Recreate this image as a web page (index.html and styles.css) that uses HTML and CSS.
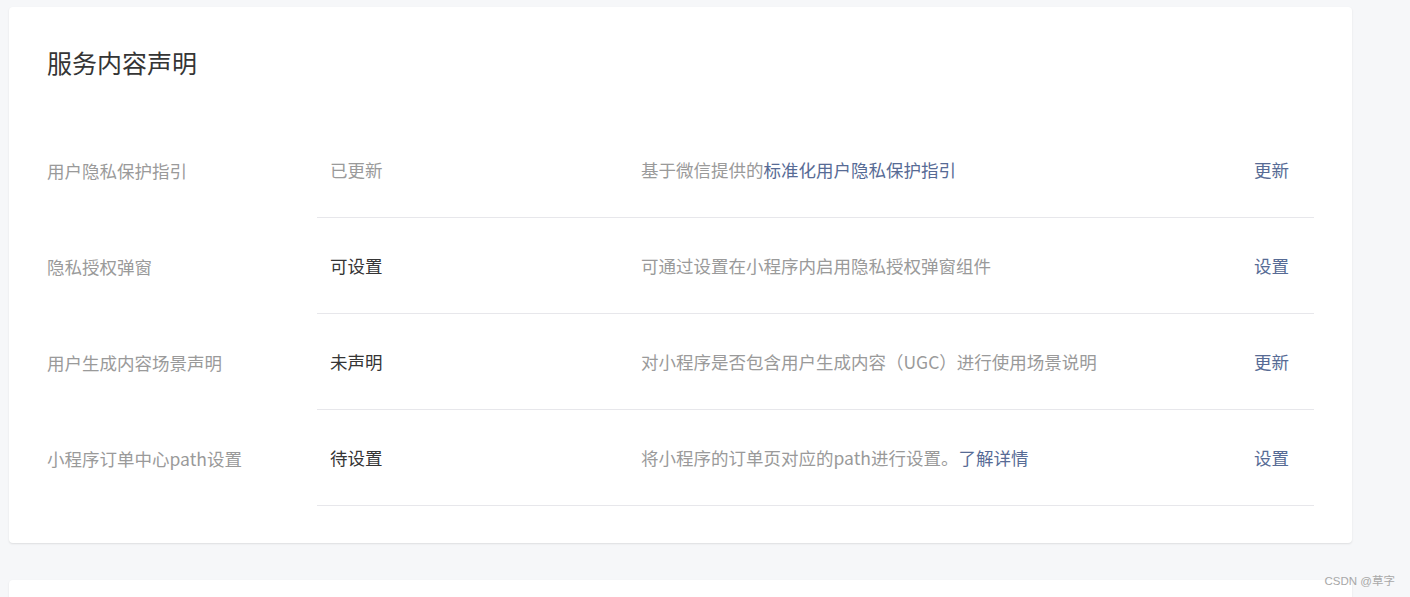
FILE: index.html
```html
<!DOCTYPE html>
<html lang="zh-CN">
  <head>
    <meta charset="UTF-8" />
    <meta name="viewport" content="width=device-width, initial-scale=1.0" />
    <title>服务内容声明</title>
    <link rel="stylesheet" href="styles.css">
  </head>
  <body>
    <div class="page">
      <div class="card">
        <h2 class="card-title">服务内容声明</h2>
        <div class="table">
          <div class="row">
            <div class="label">用户隐私保护指引</div>
            <div class="cells">
              <div class="status muted">已更新</div>
              <div class="desc">基于微信提供的<a class="link" href="#">标准化用户隐私保护指引</a></div>
              <a class="action link" href="#">更新</a>
            </div>
          </div>
          <div class="row">
            <div class="label">隐私授权弹窗</div>
            <div class="cells">
              <div class="status">可设置</div>
              <div class="desc">可通过设置在小程序内启用隐私授权弹窗组件</div>
              <a class="action link" href="#">设置</a>
            </div>
          </div>
          <div class="row">
            <div class="label">用户生成内容场景声明</div>
            <div class="cells">
              <div class="status">未声明</div>
              <div class="desc">对小程序是否包含用户生成内容（UGC）进行使用场景说明</div>
              <a class="action link" href="#">更新</a>
            </div>
          </div>
          <div class="row">
            <div class="label">小程序订单中心path设置</div>
            <div class="cells">
              <div class="status">待设置</div>
              <div class="desc">将小程序的订单页对应的path进行设置。<a class="link" href="#">了解详情</a></div>
              <a class="action link" href="#">设置</a>
            </div>
          </div>
        </div>
      </div>
      <div class="card card-next"></div>
    </div>
    <div class="watermark">CSDN @草字</div>
  </body>
</html>
```

FILE: styles.css
```css
html, body {
  height: 100%;
  overflow: hidden;
}

body {
  margin: 0;
  background: #f6f7f9;
  font-family: "Noto Sans CJK SC", "Noto Sans", sans-serif;
  color: #353535;
}

.page {
  padding: 7px 0 0 9px;
}

.card {
  width: 1343px;
  box-sizing: border-box;
  background: #fff;
  border-radius: 4px;
  box-shadow: 0 1px 2px rgba(0, 0, 0, 0.1);
  padding: 38px 38px 37px;
}

.card-next {
  margin-top: 37px;
  height: 200px;
}

.card-title {
  margin: 0;
  font-size: 25px;
  font-weight: normal;
  line-height: 34px;
  color: #353535;
}

.table {
  margin-top: 43px;
}

.row {
  display: flex;
  font-size: 17.5px;
}

.label {
  width: 270px;
  flex-shrink: 0;
  display: flex;
  align-items: center;
  color: #9a9a9a;
}

.cells {
  flex: 1;
  display: flex;
  align-items: center;
  height: 95px;
  border-bottom: 1px solid #e7e7eb;
}

.status {
  width: 298px;
  padding-left: 13px;
  flex-shrink: 0;
  color: #353535;
}

.muted {
  color: #9a9a9a;
}

.desc {
  flex: 1;
  padding-left: 13px;
  color: #9a9a9a;
}

.link {
  color: #576b95;
  text-decoration: none;
}

.action {
  padding-right: 25px;
}

.watermark {
  position: absolute;
  right: 15px;
  bottom: 9px;
  font-family: "Liberation Sans", "Noto Sans CJK SC", sans-serif;
  font-size: 11.5px;
  color: #a8a8a8;
}
```
